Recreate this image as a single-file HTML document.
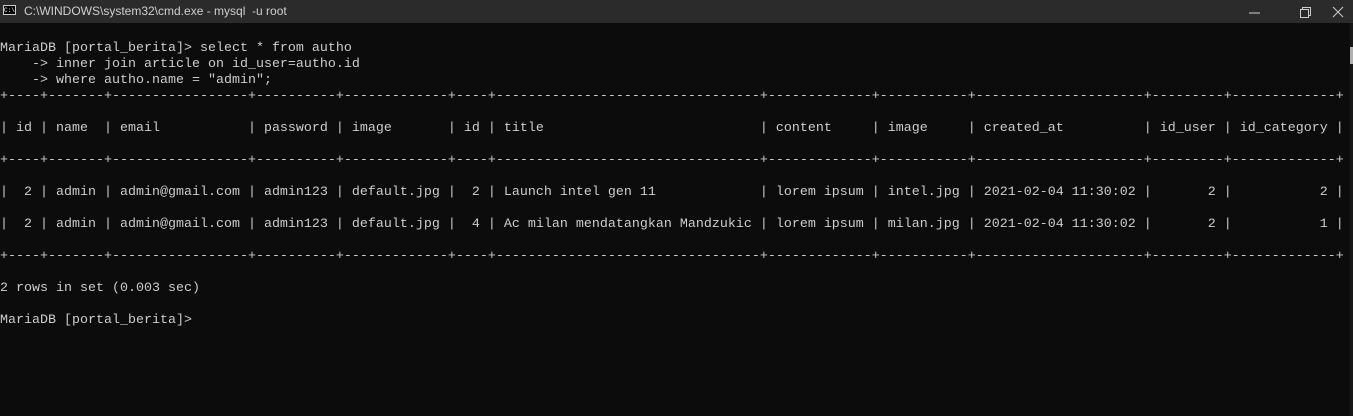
<!DOCTYPE html><html><head><style>
body{margin:0;width:1353px;height:416px;background:#0c0c0c;overflow:hidden;position:relative}
.tb{position:absolute;left:0;top:0;width:1353px;height:23px;background:#2b2b2b;color:#cfcfcf;font:12px "Liberation Sans",sans-serif}
.tb .t{position:absolute;left:24px;top:4px}
.ic{position:absolute;left:3px;top:5px;width:13px;height:10px;border:1px solid #ccc;background:#000;color:#fff;font:6px "Liberation Mono";line-height:10px;box-sizing:border-box}
pre{position:absolute;left:0;top:41px;margin:0;color:#cccccc;font:13.33px/16px "Liberation Mono",monospace;white-space:pre}
.sb{position:absolute;right:0;top:23px;width:3px;height:393px;background:#171717}
.th{position:absolute;right:0;top:47px;width:3px;height:17px;background:#b0b0b0}
</style></head><body>
<div class="tb"><div class="ic">C:\</div><span class="t">C:\WINDOWS\system32\cmd.exe - mysql&nbsp; -u root</span>
<svg style="position:absolute;left:1236px;top:4px" width="110" height="16"><line x1="13" y1="9" x2="24" y2="9" stroke="#ccc"/><rect x="64.5" y="5.5" width="8" height="8" fill="none" stroke="#ccc"/><path d="M66.5 5.5V3.5H74.5V11.5H72.5" fill="none" stroke="#ccc"/><path d="M97 3L107 13M107 3L97 13" stroke="#ccc"/></svg></div>
<div class="sb"></div><div class="th"></div>
<pre>MariaDB [portal_berita]> select * from autho
    -> inner join article on id_user=autho.id
    -> where autho.name = "admin";
+----+-------+-----------------+----------+-------------+----+---------------------------------+-------------+-----------+---------------------+---------+-------------+

| id | name  | email           | password | image       | id | title                           | content     | image     | created_at          | id_user | id_category |

+----+-------+-----------------+----------+-------------+----+---------------------------------+-------------+-----------+---------------------+---------+-------------+

|  2 | admin | admin@gmail.com | admin123 | default.jpg |  2 | Launch intel gen 11             | lorem ipsum | intel.jpg | 2021-02-04 11:30:02 |       2 |           2 |

|  2 | admin | admin@gmail.com | admin123 | default.jpg |  4 | Ac milan mendatangkan Mandzukic | lorem ipsum | milan.jpg | 2021-02-04 11:30:02 |       2 |           1 |

+----+-------+-----------------+----------+-------------+----+---------------------------------+-------------+-----------+---------------------+---------+-------------+

2 rows in set (0.003 sec)

MariaDB [portal_berita]></pre>
</body></html>
